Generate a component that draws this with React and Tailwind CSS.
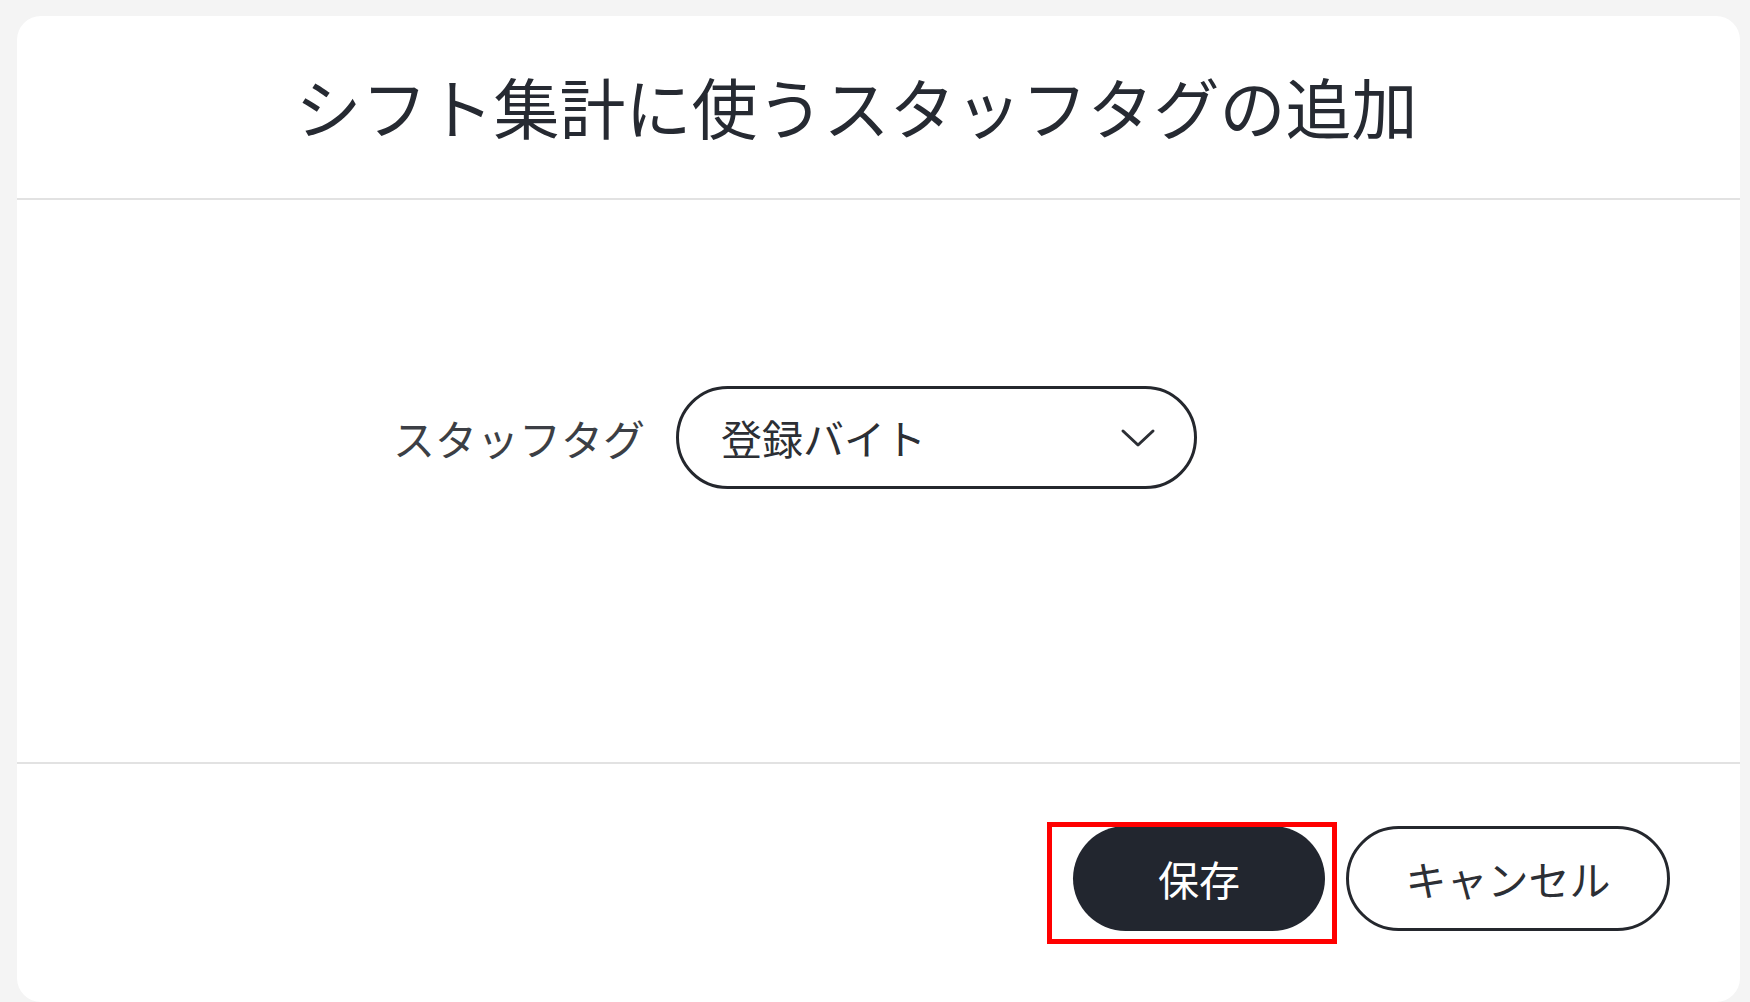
import React from "react";

const font = {
  fontFamily: '"Noto Sans CJK JP", "Noto Sans", sans-serif',
};

const App = () => {
  return (
    <div
      className="w-full h-[1002px] bg-[#f4f4f4] pl-[17px] pr-[10px] pt-[16px] overflow-hidden"
      style={font}
    >
      <div className="bg-white rounded-[24px] h-[986px] flex flex-col">
        <div className="h-[184px] flex items-center justify-center border-b-2 border-[#e2e2e2] pr-[44px]">
          <h1 className="text-[66px] leading-none text-[#262a32] font-normal pb-[4px]">
            シフト集計に使うスタッフタグの追加
          </h1>
        </div>

        <div className="h-[562px] pt-[186px] pl-[376px] flex items-start gap-[31px]">
          <span className="text-[42px] leading-[103px] text-[#3c3f45]">
            スタッフタグ
          </span>
          <button className="w-[521px] h-[103px] rounded-full border-[3.5px] border-[#24272d] flex items-center justify-between pl-[42px] pr-[38px]">
            <span className="text-[41px] leading-none text-[#2c2f35]">
              登録バイト
            </span>
            <svg
              width="36"
              height="20"
              viewBox="0 0 36 20"
              fill="none"
              stroke="#2c2f35"
              strokeWidth="3"
              strokeLinecap="round"
              strokeLinejoin="round"
            >
              <path d="M3 3 L18 17 L33 3" />
            </svg>
          </button>
        </div>

        <div className="border-t-2 border-[#e2e2e2] flex justify-end items-start pt-[62px] pr-[70px] gap-[21px]">
          <div className="relative">
            <button className="w-[252px] h-[105px] rounded-full bg-[#22262f] text-white text-[41px] leading-none">
              保存
            </button>
            <span className="absolute -left-[26px] -right-[12px] -top-[4px] -bottom-[13px] border-[5px] border-[#ff0000] pointer-events-none" />
          </div>
          <button className="w-[324px] h-[105px] rounded-full border-[3.5px] border-[#24272d] bg-white text-[#2c2f35] text-[41px] leading-none">
            キャンセル
          </button>
        </div>
      </div>
    </div>
  );
};

export default App;
